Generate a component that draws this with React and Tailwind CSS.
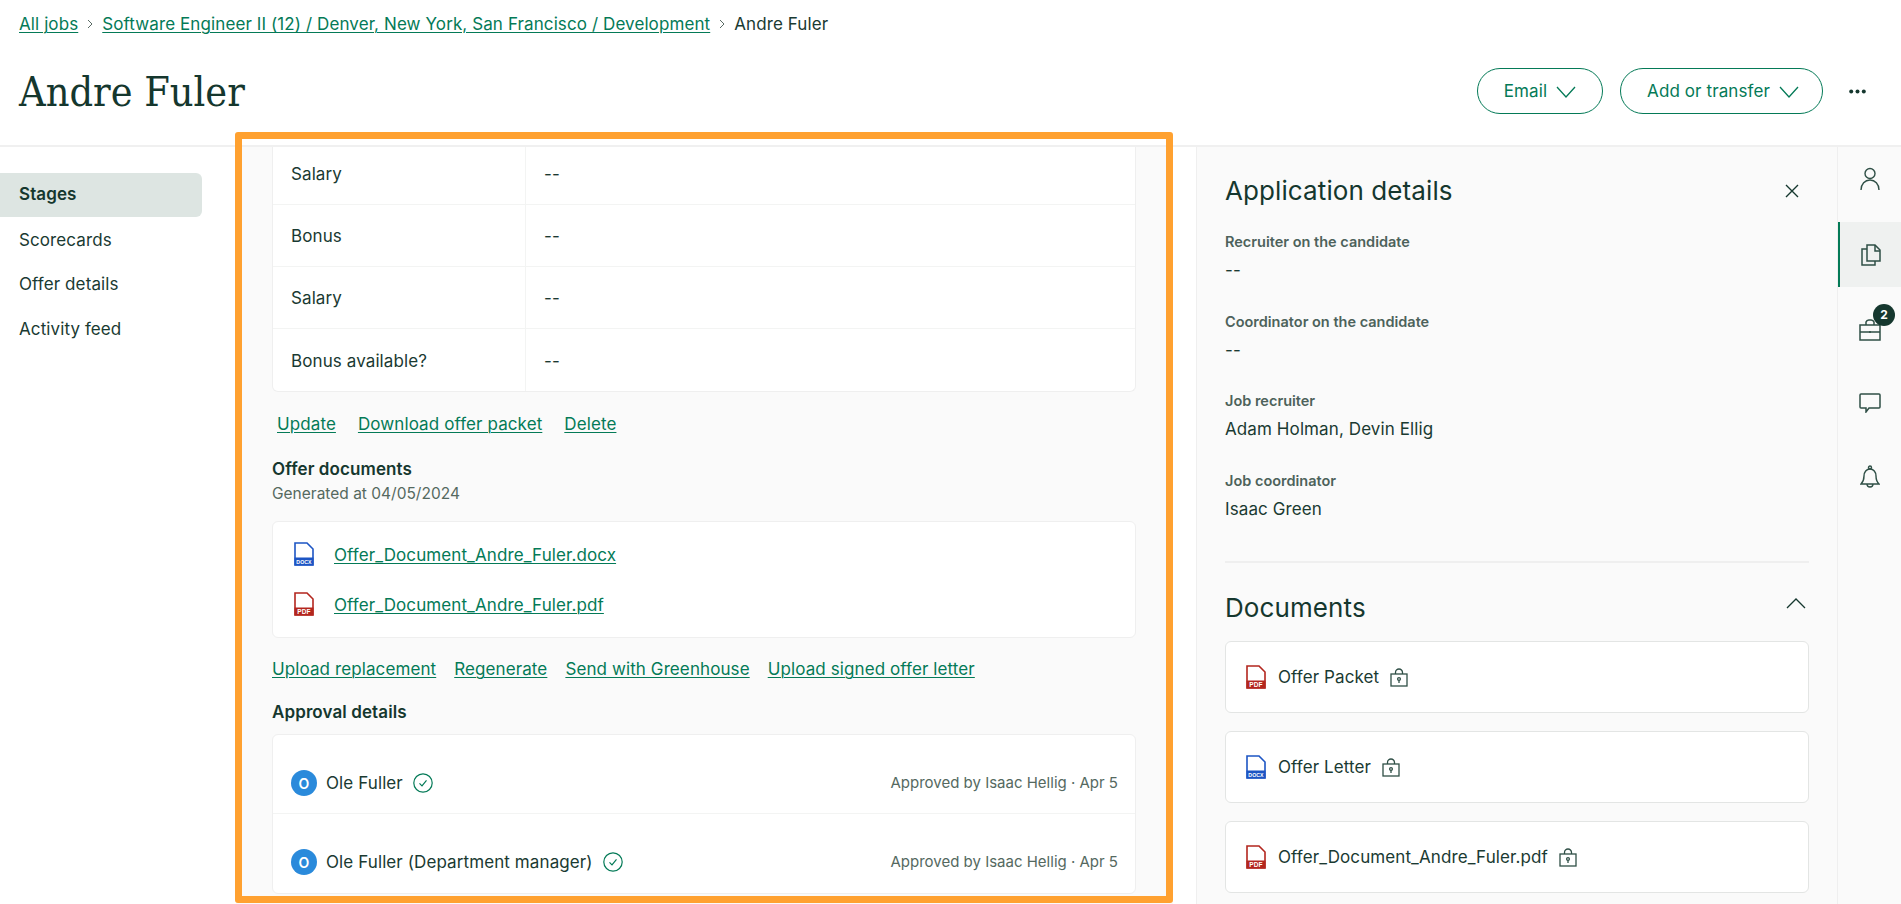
const sans = { fontFamily: "'Inter', 'Liberation Sans', sans-serif" };

function FileIcon({ kind, className = '' }) {
  const c = kind === 'pdf' ? '#b3261e' : '#1d55c4';
  return (
    <svg width="20" height="24" viewBox="0 0 20 24" className={`shrink-0 ${className}`}>
      <path d="M1 1h12l6 6v16H1z" fill="#fff" stroke={c} strokeWidth="1.6" />
      <rect x="0.5" y="15.5" width="19" height="8" fill={c} />
      <text x="10" y="22" textAnchor="middle" fontSize={kind === 'pdf' ? 6.5 : 5.2} fontWeight="700" fill="#fff" fontFamily="Liberation Sans, sans-serif">{kind === 'pdf' ? 'PDF' : 'DOCX'}</text>
    </svg>
  );
}

function Lock() {
  return (
    <svg width="18" height="19" viewBox="0 0 18 19" fill="none" stroke="#2f4f46" strokeWidth="1.3" className="shrink-0">
      <rect x="1" y="6" width="16" height="12" />
      <path d="M5.500 6V4.500a3.500 3.500 0 0 1 7 0V6" />
      <circle cx="9" cy="11" r="1.400" />
      <path d="M9 12.400V15" />
    </svg>
  );
}

function Check() {
  return (
    <svg width="20" height="20" viewBox="0 0 20 20" fill="none" stroke="#047a57" strokeWidth="1.2" className="shrink-0">
      <circle cx="10" cy="10" r="9.200" />
      <path d="M6.500 10.300l2.500 2.500 4.500-5.500" />
    </svg>
  );
}

function Chevron({ color = '#047a57', up = false, className = '' }) {
  return (
    <svg width="20" height="12" viewBox="0 0 20 12" fill="none" stroke={color} strokeWidth="1.3" className={`shrink-0 ${className}`}>
      <path d={up ? 'M1 11l9-9 9 9' : 'M1 1l9 10 9-10'} />
    </svg>
  );
}

const Crumb = () => (
  <svg width="6" height="10" viewBox="0 0 6 10" fill="none" stroke="#5a6b65" strokeWidth="1" className="shrink-0 mx-[1px]">
    <path d="M1 1l4 4-4 4" />
  </svg>
);

const Link = ({ children, className = '' }) => (
  <a className={`text-[#047a57] underline underline-offset-2 decoration-1 whitespace-nowrap ${className}`}>{children}</a>
);

function Row({ label, last }) {
  return (
    <div className={`flex h-[62px] ${last ? '' : 'border-b border-[#f3f4f3]'}`}>
      <div className="w-[253px] pl-[18px] pt-[3px] flex items-center border-r border-[#f3f4f3] text-[#1a3a32]">{label}</div>
      <div className="pl-[18px] pt-[3px] flex items-center text-[#1a3a32]">--</div>
    </div>
  );
}

function Approval({ name, last }) {
  return (
    <div className={`h-[79px] pt-[35px] pl-[18px] pr-[17px] flex items-start justify-between ${last ? '' : 'border-b border-[#f3f4f3]'}`}>
      <div className="flex items-center">
        <div className="w-[26px] h-[26px] rounded-full bg-[#2a8adb] text-white text-[14px] font-semibold flex items-center justify-center">O</div>
        <span className="ml-[9px] mr-[10px] pt-[1px] text-[#1a3a32]">{name}</span>
        <Check />
      </div>
      <span className="text-[15px] tracking-normal text-[#55695f] leading-[26px]">Approved by Isaac Hellig · Apr 5</span>
    </div>
  );
}

function Detail({ label, value, className = '' }) {
  return (
    <div className={className}>
      <div className="text-[14.5px] tracking-normal font-semibold text-[#4d625b] leading-[20px]">{label}</div>
      <div className="mt-[8px] text-[#1a3a32] leading-[20px]">{value}</div>
    </div>
  );
}

function DocCard({ kind, name }) {
  return (
    <div className="h-[72px] bg-white border border-[#e3e5e4] rounded-[6px] flex items-center pl-[20px]">
      <FileIcon kind={kind} />
      <span className="ml-[12px] mr-[11px] pt-[2px] text-[#1a3a32]">{name}</span>
      <Lock />
    </div>
  );
}

function RailItem({ active, children, badge }) {
  return (
    <div className={`relative h-[65px] flex items-center justify-center ${active ? 'bg-[#eff1f0] border-l-2 border-[#047a57]' : ''}`}>
      {children}
      {badge && <span className="absolute left-[35px] top-[7px] w-[22px] h-[22px] rounded-full bg-[#15372e] text-white text-[12px] font-bold flex items-center justify-center tracking-normal">{badge}</span>}
    </div>
  );
}

export default function App() {
  return (
    <div className="relative w-[1901px] h-[904px] overflow-hidden bg-white flex flex-col text-[17px] tracking-[0.1px] text-[#1a3a32]" style={sans}>
      <header className="h-[147px] shrink-0 border-b-2 border-[#f0f0f0] pl-[19px] pr-[35px]">
        <nav className="h-[48px] flex items-center gap-[8px] leading-[20px]">
          <Link>All jobs</Link>
          <Crumb />
          <Link>Software Engineer II (12) / Denver, New York, San Francisco / Development</Link>
          <Crumb />
          <span>Andre Fuler</span>
        </nav>
        <div className="mt-[20px] h-[46px] flex items-center justify-between">
          <h1 className="text-[41px] pt-[2px] leading-[50px] text-[#15372e] tracking-normal" style={{ fontFamily: "'DejaVu Serif Condensed', 'Liberation Serif', serif" }}>Andre Fuler</h1>
          <div className="flex items-center">
            <button className="h-[46px] w-[126px] pt-[1px] border border-[#047a57] rounded-full text-[#047a57] flex items-center justify-center gap-[9px]">Email <Chevron /></button>
            <button className="ml-[17px] h-[46px] w-[203px] pt-[1px] pl-[3px] border border-[#047a57] rounded-full text-[#047a57] flex items-center justify-center gap-[9px]">Add or transfer <Chevron /></button>
            <svg width="17" height="5" viewBox="0 0 17 5" className="ml-[26px]" fill="#15372e"><circle cx="2.200" cy="2.500" r="2" /><circle cx="8.500" cy="2.500" r="2" /><circle cx="14.800" cy="2.500" r="2" /></svg>
          </div>
        </div>
      </header>

      <main className="flex-1 flex min-h-0">
        <aside className="w-[236px] shrink-0 pt-[26px]">
          <div className="w-[202px] h-[44px] mb-[1px] bg-[#dde5e2] rounded-r-[6px] flex items-center pl-[19px] font-semibold text-[#15372e]">Stages</div>
          <div className="pl-[19px] h-[44.5px] flex items-center">Scorecards</div>
          <div className="pl-[19px] h-[44.5px] flex items-center">Offer details</div>
          <div className="pl-[19px] h-[44.5px] flex items-center">Activity feed</div>
        </aside>

        <section className="w-[961px] shrink-0 bg-white border-r border-[#efefef] overflow-hidden">
          <div className="w-[937px] h-full bg-[#fafafa] pl-[36px] pr-[37px] overflow-hidden">
            <div className="-mt-[4px] bg-white border border-t-0 border-[#efefef] rounded-b-[6px]">
              <Row label="Salary" />
              <Row label="Bonus" />
              <Row label="Salary" />
              <Row label="Bonus available?" last />
            </div>
            <div className="mt-[22px] pl-[5px] flex gap-[22px] leading-[20px]">
              <Link>Update</Link><Link>Download offer packet</Link><Link>Delete</Link>
            </div>
            <div className="mt-[25px] font-semibold text-[#15372e] leading-[20px]">Offer documents</div>
            <div className="mt-[5px] text-[15.5px] tracking-normal text-[#55695f] leading-[20px]">Generated at 04/05/2024</div>
            <div className="mt-[17px] h-[117px] bg-white border border-[#efefef] rounded-[6px] pl-[21px] pt-[20px] flex flex-col gap-[23px]">
              <div className="flex items-center gap-[20px]"><FileIcon kind="docx" className="mb-[3px]" /><Link>Offer_Document_Andre_Fuler.docx</Link></div>
              <div className="flex items-center gap-[20px]"><FileIcon kind="pdf" className="mb-[3px]" /><Link>Offer_Document_Andre_Fuler.pdf</Link></div>
            </div>
            <div className="mt-[21px] flex gap-[18px] leading-[20px]">
              <Link>Upload replacement</Link><Link>Regenerate</Link><Link>Send with Greenhouse</Link><Link>Upload signed offer letter</Link>
            </div>
            <div className="mt-[23px] font-semibold text-[#15372e] leading-[20px]">Approval details</div>
            <div className="mt-[12px] bg-white border border-[#efefef] rounded-[6px]">
              <Approval name="Ole Fuller" />
              <Approval name="Ole Fuller (Department manager)" last />
            </div>
          </div>
        </section>

        <section className="flex-1 bg-[#fafafa] pl-[28px] pr-[28px] overflow-hidden">
          <div className="pt-[26px] flex items-center justify-between">
            <h2 className="text-[26px] leading-[36px] text-[#15372e]">Application details</h2>
            <svg width="14" height="14" viewBox="0 0 14 14" fill="none" stroke="#15372e" strokeWidth="1.400" className="mr-[10px]"><path d="M1 1l12 12M13 1L1 13" /></svg>
          </div>
          <Detail className="mt-[23px]" label="Recruiter on the candidate" value="--" />
          <Detail className="mt-[32px]" label="Coordinator on the candidate" value="--" />
          <Detail className="mt-[31px]" label="Job recruiter" value="Adam Holman, Devin Ellig" />
          <Detail className="mt-[32px]" label="Job coordinator" value="Isaac Green" />
          <div className="mt-[42px] border-t-2 border-[#efefef]" />
          <div className="mt-[27px] flex items-center justify-between">
            <h2 className="text-[26px] leading-[36px] text-[#15372e]">Documents</h2>
            <Chevron color="#15372e" up className="mr-[3px] mb-[10px]" />
          </div>
          <div className="mt-[15px] flex flex-col gap-[18px]">
            <DocCard kind="pdf" name="Offer Packet" />
            <DocCard kind="docx" name="Offer Letter" />
            <DocCard kind="pdf" name="Offer_Document_Andre_Fuler.pdf" />
          </div>
        </section>

        <aside className="w-[64px] shrink-0 bg-[#fafafa] border-l border-[#efefef]">
          <RailItem>
            <svg width="20" height="24" viewBox="0 0 20 24" fill="none" stroke="#2f4f46" strokeWidth="1.400" className="mb-[2px]"><circle cx="10" cy="6.500" r="5" /><path d="M1 23c0-6 4-10 9-10s9 4 9 10" /></svg>
          </RailItem>
          <div className="h-[10px]" />
          <RailItem active>
            <svg width="20" height="22" viewBox="0 0 20 22" fill="none" stroke="#2f4f46" strokeWidth="1.500"><path d="M6 1h8l5 5v11H6z" /><path d="M14 1v6h5" /><path d="M6 5H1v16h13v-4" /></svg>
          </RailItem>
          <div className="h-[10px]" />
          <RailItem badge="2">
            <svg width="22" height="22" viewBox="0 0 22 22" fill="none" stroke="#2f4f46" strokeWidth="1.500"><rect x="1" y="6" width="20" height="15" /><path d="M1 13h20M7 6V3a3 3 0 0 1 3-2h2a3 3 0 0 1 3 2v3M11 12v2" /></svg>
          </RailItem>
          <div className="h-[8px]" />
          <RailItem>
            <svg width="22" height="20" viewBox="0 0 22 20" fill="none" stroke="#2f4f46" strokeWidth="1.500"><path d="M2 1h18a1 1 0 0 1 1 1v12a1 1 0 0 1-1 1H10l-3 4v-4H2a1 1 0 0 1-1-1V2a1 1 0 0 1 1-1z" /></svg>
          </RailItem>
          <div className="h-[9px]" />
          <RailItem>
            <svg width="20" height="24" viewBox="0 0 20 24" fill="none" stroke="#2f4f46" strokeWidth="1.400"><circle cx="10" cy="2.500" r="1.500" /><path d="M4 11c0-4 2.500-7 6-7s6 3 6 7c0 4 1 6 3 8H1c2-2 3-4 3-8z" /><path d="M7 19a3 3 0 0 0 6 0" /></svg>
          </RailItem>
        </aside>
      </main>

      <div className="absolute left-[235px] top-[132px] w-[938px] h-[771px] border-[7px] border-[#ffa130] rounded-[3px] pointer-events-none" />
    </div>
  );
}
